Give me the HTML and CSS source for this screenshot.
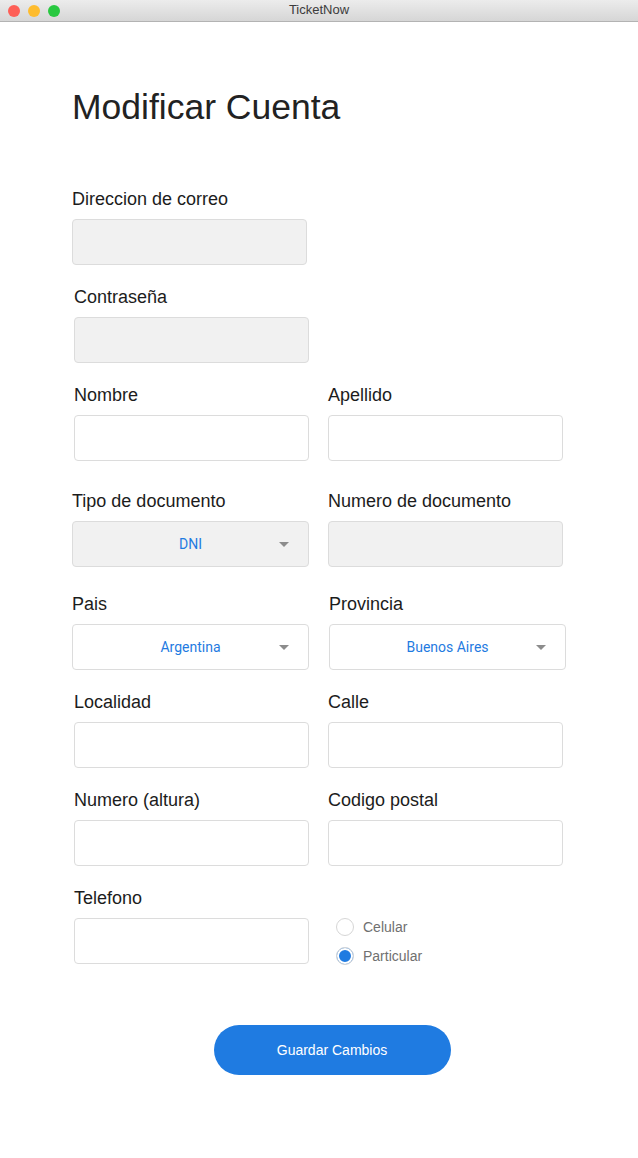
FILE: index.html
```html
<!DOCTYPE html>
<html lang="es">
<head>
<meta charset="utf-8">
<title>TicketNow</title>
<link rel="stylesheet" href="styles.css">
</head>
<body>
<div class="titlebar">
  <div class="lights">
    <span class="light red"></span>
    <span class="light yellow"></span>
    <span class="light green"></span>
  </div>
  <div class="wtitle">TicketNow</div>
</div>
<main class="page">
  <h1 class="heading">Modificar Cuenta</h1>
  <form class="form">
    <div class="row first">
      <div class="field">
        <label class="label">Direccion de correo</label>
        <div class="box filled"></div>
      </div>
    </div>
    <div class="row gap22">
      <div class="field off2">
        <label class="label">Contraseña</label>
        <div class="box filled"></div>
      </div>
    </div>
    <div class="row gap22">
      <div class="field off2">
        <label class="label">Nombre</label>
        <div class="box"></div>
      </div>
      <div class="field">
        <label class="label">Apellido</label>
        <div class="box"></div>
      </div>
    </div>
    <div class="row gap30">
      <div class="field">
        <label class="label">Tipo de documento</label>
        <div class="select filled"><span class="sel-text">DNI</span><span class="arrow"></span></div>
      </div>
      <div class="field">
        <label class="label">Numero de documento</label>
        <div class="box filled"></div>
      </div>
    </div>
    <div class="row gap27">
      <div class="field">
        <label class="label">Pais</label>
        <div class="select"><span class="sel-text">Argentina</span><span class="arrow"></span></div>
      </div>
      <div class="field off1">
        <label class="label">Provincia</label>
        <div class="select"><span class="sel-text">Buenos Aires</span><span class="arrow"></span></div>
      </div>
    </div>
    <div class="row gap22">
      <div class="field off2">
        <label class="label">Localidad</label>
        <div class="box"></div>
      </div>
      <div class="field">
        <label class="label">Calle</label>
        <div class="box"></div>
      </div>
    </div>
    <div class="row gap22">
      <div class="field off2">
        <label class="label">Numero (altura)</label>
        <div class="box"></div>
      </div>
      <div class="field">
        <label class="label">Codigo postal</label>
        <div class="box"></div>
      </div>
    </div>
    <div class="row gap22">
      <div class="field off2">
        <label class="label">Telefono</label>
        <div class="box"></div>
      </div>
      <div class="radios">
        <div class="radio"><span class="dot"></span><span class="rlabel">Celular</span></div>
        <div class="radio"><span class="dot checked"></span><span class="rlabel">Particular</span></div>
      </div>
    </div>
    <div class="actions">
      <button type="button" class="btn">Guardar Cambios</button>
    </div>
  </form>
</main>
</body>
</html>
```
FILE: styles.css
```css
* { box-sizing: border-box; }
html, body { margin: 0; padding: 0; background: #ffffff; }
body {
  font-family: "Liberation Sans", Arial, sans-serif;
  color: #1c1c1c;
  width: 638px;
  min-height: 1158px;
}
.titlebar {
  height: 22px;
  background: linear-gradient(#ececec, #d6d6d6);
  border-bottom: 1px solid #b3b3b3;
  display: flex;
  align-items: center;
  position: relative;
}
.lights {
  display: flex;
  gap: 8px;
  padding-left: 8px;
}
.light {
  width: 12px;
  height: 12px;
  border-radius: 50%;
  display: block;
}
.red { background: #fe5f57; }
.yellow { background: #febc2e; }
.green { background: #28c840; }
.wtitle {
  position: absolute;
  left: 0;
  right: 0;
  top: 0;
  text-align: center;
  font-size: 13px;
  line-height: 20px;
  color: #3c3c3c;
}
.page {
  padding-left: 72px;
  width: 592px;
}
.heading {
  margin: 65px 0 0 0;
  font-size: 35.5px;
  line-height: 40px;
  font-weight: normal;
  color: #222;
}
.form {
  margin-top: 62px;
  display: flex;
  flex-direction: column;
}
.row {
  display: grid;
  grid-template-columns: 256px 264px;
}
.gap22 { margin-top: 22px; }
.gap27 { margin-top: 27px; }
.gap30 { margin-top: 30px; }
.field { display: flex; flex-direction: column; }
.off2 { margin-left: 2px; }
.off1 { margin-left: 1px; }
.label {
  display: block;
  font-size: 18px;
  line-height: 20px;
  margin-bottom: 10px;
  color: #1c1c1c;
}
.box {
  width: 235px;
  height: 46px;
  border: 1px solid #dcdcdc;
  border-radius: 4px;
  background: #fff;
}
.filled { background: #f1f1f1; }
.select {
  width: 237px;
  height: 46px;
  border: 1px solid #dcdcdc;
  border-radius: 4px;
  background: #fff;
  display: flex;
  align-items: center;
  justify-content: center;
  position: relative;
}
.select.filled { background: #f1f1f1; }
.sel-text {
  font-family: Roboto, "Liberation Sans", sans-serif;
  font-size: 14px;
  color: #1f7be1;
  margin-top: -1px;
}
.arrow {
  position: absolute;
  right: 19px;
  top: 20px;
  width: 0;
  height: 0;
  border-left: 5px solid transparent;
  border-right: 5px solid transparent;
  border-top: 5px solid #8c8c8c;
}
.radios {
  padding-top: 30px;
  padding-left: 8px;
  display: flex;
  flex-direction: column;
  gap: 11px;
}
.radio {
  display: flex;
  align-items: center;
  gap: 9px;
  height: 18px;
}
.dot {
  width: 18px;
  height: 18px;
  border-radius: 50%;
  border: 1px solid #d6d6d6;
  background: #fff;
  display: block;
}
.dot.checked {
  background: #1f7be1;
  box-shadow: inset 0 0 0 2px #fff;
}
.rlabel {
  font-size: 14px;
  color: #707070;
}
.actions {
  margin-top: 60px;
  display: flex;
  justify-content: center;
}
.btn {
  width: 237px;
  height: 50px;
  border: none;
  border-radius: 25px;
  background: #1f7be1;
  color: #fff;
  font-family: "Liberation Sans", Arial, sans-serif;
  font-size: 14px;
  padding: 0;
}
```
